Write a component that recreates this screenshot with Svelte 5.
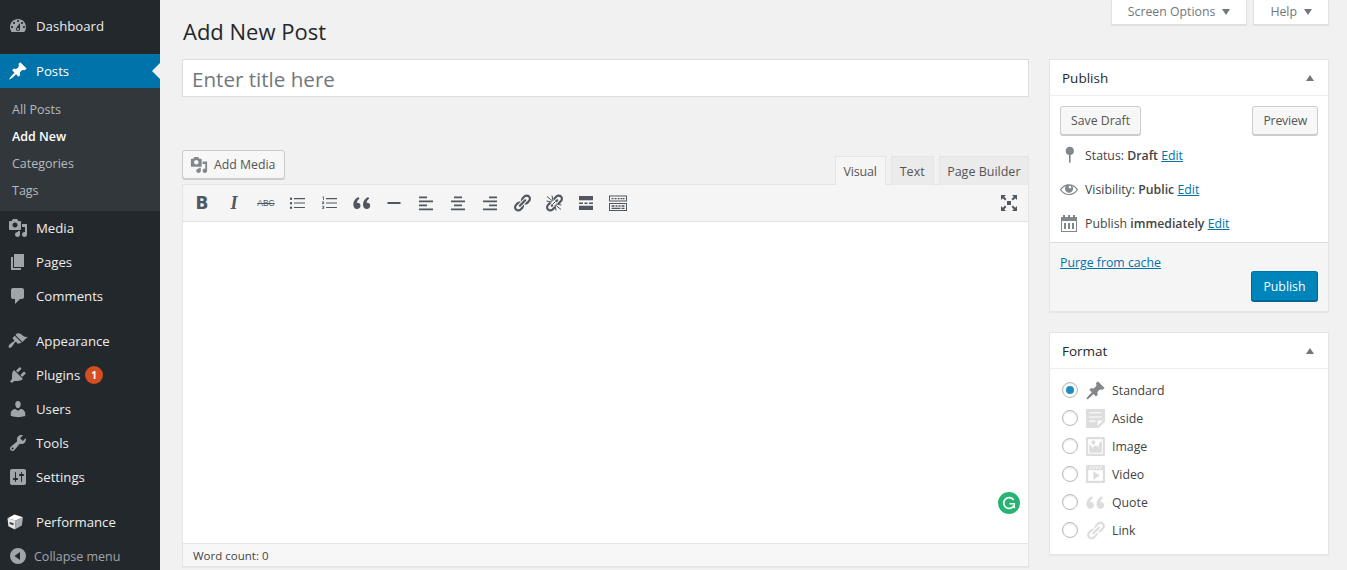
<script lang="ts">
  const ic = {
    dashboard: "M3.76 16h12.48c1.1-1.37 1.76-3.11 1.76-5 0-4.42-3.58-8-8-8s-8 3.58-8 8c0 1.89.66 3.63 1.76 5zM10 4c.55 0 1 .45 1 1s-.45 1-1 1-1-.45-1-1 .45-1 1-1zM6 6c.55 0 1 .45 1 1s-.45 1-1 1-1-.45-1-1 .45-1 1-1zm8 0c.55 0 1 .45 1 1s-.45 1-1 1-1-.45-1-1 .45-1 1-1zm-5.37 5.55L12 7v6c0 1.1-.9 2-2 2s-2-.9-2-2c0-.57.24-1.08.63-1.45zM4 10c.55 0 1 .45 1 1s-.45 1-1 1-1-.45-1-1 .45-1 1-1zm12 0c.55 0 1 .45 1 1s-.45 1-1 1-1-.45-1-1 .45-1 1-1zm-5 3c0-.55-.45-1-1-1s-1 .45-1 1 .45 1 1 1 1-.45 1-1z",
    pin: "M10.44 3.02l1.82-1.82 6.36 6.35-1.83 1.82c-1.05-.68-2.48-.57-3.41.36l-.75.75c-.92.93-1.04 2.35-.35 3.41l-1.83 1.82-2.41-2.41-2.8 2.79c-.42.42-3.38 2.71-3.8 2.29s1.86-3.39 2.28-3.81l2.79-2.79L4.1 9.36l1.83-1.82c1.05.69 2.48.57 3.4-.36l.75-.75c.93-.92 1.05-2.35.36-3.41z",
    media: "M13 11V4c0-.55-.45-1-1-1h-1.67L9 1H5L3.67 3H2c-.55 0-1 .45-1 1v7c0 .55.45 1 1 1h10c.55 0 1-.45 1-1zM7 4.5c1.38 0 2.5 1.12 2.5 2.5S8.38 9.5 7 9.5 4.5 8.38 4.5 7 5.62 4.5 7 4.5zM14 6h5v10.5c0 1.38-1.12 2.5-2.5 2.5S14 17.88 14 16.5s1.12-2.5 2.5-2.5c.17 0 .34.02.5.05V9h-3V6zm-4 8.05V13h2v3.5c0 1.38-1.12 2.5-2.5 2.5S7 17.88 7 16.5 8.12 14 9.5 14c.17 0 .34.02.5.05z",
    page: "M6 15V2h10v13H6zm-1 1h8v2H3V5h2v11z",
    comment: "M5 2h9c1.1 0 2 .9 2 2v7c0 1.1-.9 2-2 2h-2l-5 5v-5H5c-1.1 0-2-.9-2-2V4c0-1.1.9-2 2-2z",
    brush: "M14.48 11.06L7.41 3.99l1.5-1.5c.5-.56 2.3-.47 3.51.32 1.21.8 1.43 1.28 2.91 2.1 1.18.64 2.45 1.26 4.45.85zm-.71.71L6.7 4.7 4.93 6.47c-.39.39-.39 1.02 0 1.41l1.06 1.06c.39.39.39 1.03 0 1.42-.6.6-3.4 2.1-4.2 2.9-.9.9-1.7 2.6-1 3.3.7.7 2.4-.1 3.3-1 .8-.8 2.3-3.6 2.9-4.2.39-.39 1.02-.39 1.41 0l1.06 1.06c.39.39 1.02.39 1.41 0z",
    plug: "M13.11 4.36L9.87 7.6 8 5.73l3.24-3.24c.35-.34 1.05-.2 1.56.32.52.51.66 1.21.31 1.55zm-8 1.77l.91-1.12 9.01 9.01-1.19.84c-.71.71-2.63 1.16-3.82 1.16H6.14L4.9 17.26c-.59.59-1.54.59-2.12 0-.59-.58-.59-1.53 0-2.12l1.24-1.24v-3.88c0-1.13.4-3.19 1.09-3.89zm7.26 3.97l3.24-3.24c.34-.35 1.04-.21 1.55.31.52.51.66 1.21.31 1.55l-3.24 3.25z",
    users: "M10 9.25c-2.27 0-2.73-3.44-2.73-3.44C7 4.02 7.82 2 9.97 2c2.16 0 2.98 2.02 2.71 3.81 0 0-.41 3.44-2.68 3.44zm0 2.57L12.72 10c2.39 0 4.52 2.33 4.52 4.53v2.49s-3.65 1.13-7.24 1.13c-3.65 0-7.24-1.13-7.24-1.13v-2.49c0-2.25 1.94-4.48 4.47-4.48z",
    tools: "M16.68 9.77c-1.34 1.34-3.3 1.67-4.95.99l-5.41 6.52c-.99.99-2.59.99-3.58 0s-.99-2.59 0-3.57l6.52-5.42c-.68-1.65-.35-3.61.99-4.95 1.28-1.28 3.12-1.62 4.72-1.06l-2.89 2.89 2.82 2.82 2.86-2.87c.53 1.58.18 3.39-1.08 4.65zM3.81 16.21c.4.39 1.04.39 1.43 0 .4-.4.4-1.04 0-1.43-.39-.4-1.03-.4-1.43 0-.39.39-.39 1.03 0 1.43z",
    settings: "M18 16V4c0-1.1-.9-2-2-2H4c-1.1 0-2 .9-2 2v12c0 1.1.9 2 2 2h12c1.1 0 2-.9 2-2zM8 11h1c.55 0 1 .45 1 1s-.45 1-1 1H8v1.5c0 .28-.22.5-.5.5s-.5-.22-.5-.5V13H6c-.55 0-1-.45-1-1s.45-1 1-1h1V5.5c0-.28.22-.5.5-.5s.5.22.5.5V11zm5-2h-1c-.55 0-1-.45-1-1s.45-1 1-1h1V5.5c0-.28.22-.5.5-.5s.5.22.5.5V7h1c.55 0 1 .45 1 1s-.45 1-1 1h-1v5.5c0 .28-.22.5-.5.5s-.5-.22-.5-.5V9z",
    collapse: "M10 2a8 8 0 1 0 0 16 8 8 0 0 0 0-16zm2 4v8L6.5 10z",
    statusPin: "M10.8 1.8a4.2 4.2 0 0 1 .8 8.3V17l-.8 1.5L10 17v-6.9a4.2 4.2 0 0 1 .8-8.3z",
    eye: "M18.3 9.5C15 4.9 8.5 3.8 3.9 7.2c-1.2.9-2.2 2.1-3 3.4.2.4.5.8.8 1.2 3.3 4.6 9.6 5.6 14.2 2.4.9-.7 1.7-1.4 2.4-2.4.3-.4.5-.8.8-1.2-.3-.4-.5-.8-.8-1.1zm-8.2-2.3c.5-.5 1.3-.5 1.8 0s.5 1.3 0 1.8-1.3.5-1.8 0c-.5-.4-.5-1.3 0-1.8zm-.1 7.7c-3.1 0-6-1.6-7.7-4.2C3.5 9 5.1 7.8 7 7c-.7.8-1 1.7-1 2.7 0 2.2 1.7 4.1 4 4.1 2.2 0 4.1-1.7 4.1-4 0-1-.4-2-1.1-2.7 1.9.8 3.5 2 4.6 3.7-1.7 2.6-4.6 4.2-7.6 4.1z",
    calendar: "M2 4h2V2h2v2h3V2h2v2h3V2h2v2h2v15H2zm1 4v10h14V8zm2 2h2v6H5zm4 0h2v6H9zm4 0h2v6h-2z",
    aside: "M1 1h18v12l-6 6H1V1zm3 3v1h12V4H4zm0 4v1h12V8H4zm6 5v-1H4v1h6zm2 4l5-5h-5v5z",
    image: "M2.25 1h15.5c.69 0 1.25.56 1.25 1.25v15.5c0 .69-.56 1.25-1.25 1.25H2.25C1.56 19 1 18.44 1 17.75V2.25C1 1.56 1.56 1 2.25 1zM17 17V3H3v14h14zM10 6c0-1.1-.9-2-2-2s-2 .9-2 2 .9 2 2 2 2-.9 2-2zm3 5s0-6 3-6v10c0 .55-.45 1-1 1H5c-.55 0-1-.45-1-1V8c2 0 3 4 3 4s1-3 3-3 3 2 3 2z",
    video: "M2 1h16c.55 0 1 .45 1 1v16l-18-.02V2c0-.55.45-1 1-1zm4 1L4 5h1l2-3H6zm4 0H9L7 5h1zm3 0h-1l-2 3h1zm3 0h-1l-2 3h1zm1 14V6H3v10h14zM8 7l6 4-6 4V7z",
    quote: "M8.5 12.7c0-2.1-1.5-3.4-3.6-3 .1-1.5 1-3 2.6-3.9L6.4 4C3.4 5.3 1.3 8 1.3 11.5c0 2.7 1.4 4.5 3.7 4.5 2.1 0 3.5-1.4 3.5-3.3zm9.7 0c0-2.1-1.5-3.4-3.6-3 .1-1.5 1-3 2.6-3.9L16.1 4c-3 1.3-5.1 4-5.1 7.5 0 2.7 1.4 4.5 3.7 4.5 2.1 0 3.5-1.4 3.5-3.3z",
    link: "M17.74 2.76c1.68 1.69 1.68 4.41 0 6.1l-1.53 1.52c-1.12 1.12-2.7 1.47-4.14 1.09l2.62-2.61.76-.77.76-.76c.84-.84.84-2.2 0-3.04-.84-.85-2.2-.85-3.04 0l-.77.76-3.38 3.38c-.37-1.44-.02-3.02 1.1-4.14l1.52-1.53c1.69-1.68 4.42-1.68 6.1 0zM8.59 13.43l5.34-5.34c.42-.42.42-1.1 0-1.52-.44-.43-1.13-.39-1.53 0l-5.33 5.34c-.42.42-.42 1.1 0 1.52.44.43 1.13.39 1.52 0zm-.76 2.29l4.14-4.15c.38 1.44.03 3.02-1.09 4.14l-1.52 1.53c-1.69 1.68-4.41 1.68-6.1 0-1.68-1.68-1.68-4.42 0-6.1l1.53-1.52c1.12-1.12 2.7-1.47 4.14-1.1l-4.14 4.15c-.85.84-.85 2.2 0 3.05.84.84 2.2.84 3.04 0z",
    ul: "M3 4.5a1.2 1.2 0 1 1 0 2.4 1.2 1.2 0 0 1 0-2.4zM3 9a1.2 1.2 0 1 1 0 2.4A1.2 1.2 0 0 1 3 9zm0 4.5a1.2 1.2 0 1 1 0 2.4 1.2 1.2 0 0 1 0-2.4zM6 5h11v1.2H6zm0 4.4h11v1.2H6zm0 4.5h11v1.2H6z",
    ol: "M2.5 3.5h1.3v3.6h-.8V4.4h-.5zM2 8.4h2.2v.8l-1.2 1h1.2v.8H2v-.8l1.2-1H2zm0 4.3h2.2v3H2v-.7h1.4v-.5H2.5v-.6h.9v-.5H2zM6 5h11v1.2H6zm0 4.4h11v1.2H6zm0 4.5h11v1.2H6z",
    hr: "M3.5 9h13v2h-13z",
    left: "M3 3.5h8v1.7H3zm0 4h14v1.7H3zm0 4h8v1.7H3zm0 4h14v1.7H3z",
    center: "M6 3.5h8v1.7H6zm-3 4h14v1.7H3zm3 4h8v1.7H6zm-3 4h14v1.7H3z",
    right: "M9 3.5h8v1.7H9zm-6 4h14v1.7H3zm6 4h8v1.7H9zm-6 4h14v1.7H3z",
    more: "M3 3h14v4.3H3zm0 9.7h14V17H3zM3 9.4h4V11H3zm5.5 0h3V11h-3zm4.5 0h4V11h-4z",
    toggle: "M1 2.5h18v6H1zm1 1v4h16v-4zM3.5 5h2v1.3h-2zm3 0h2v1.3h-2zm3 0h2v1.3h-2zm3 0h2v1.3h-2zm2.5 0h1.5v1.3H15zM1 10h18v8H1zm1 1v6h16v-6zm1.5 1.2h3v1.5h-3zm4 0h2v1.5h-2zm3 0h2v1.5h-2zm3 0h3v1.5h-3zm-10 2.5h9v1.2h-9zm10 0h3v1.2h-3z",
    full: "M8 8h4v4H8zM2 2h5L5.2 3.8 7.5 6 6 7.5 3.8 5.2 2 7zm16 0v5l-1.8-1.8L14 7.5 12.5 6l2.3-2.2L13 2zM2 18v-5l1.8 1.8L6 12.5 7.5 14l-2.3 2.2L7 18zm16 0h-5l1.8-1.8L12.5 14l1.5-1.5 2.2 2.3L18 13z"
  };

  const menuContent = [
    { label: "Media", icon: ic.media },
    { label: "Pages", icon: ic.page },
    { label: "Comments", icon: ic.comment }
  ];
  const menuAdmin = [
    { label: "Appearance", icon: ic.brush },
    { label: "Plugins", icon: ic.plug, badge: 1 },
    { label: "Users", icon: ic.users },
    { label: "Tools", icon: ic.tools },
    { label: "Settings", icon: ic.settings }
  ];
  const subItems = [
    { label: "All Posts" },
    { label: "Add New", active: true },
    { label: "Categories" },
    { label: "Tags" }
  ];

  const toolbar = [
    { text: "B", cls: "t-bold" },
    { text: "I", cls: "t-ital" },
    { text: "ABC", cls: "t-strike" },
    { d: ic.ul },
    { d: ic.ol },
    { d: ic.quote },
    { d: ic.hr },
    { d: ic.left },
    { d: ic.center },
    { d: ic.right },
    { d: ic.link },
    { unlink: true },
    { d: ic.more },
    { d: ic.toggle }
  ];

  const formats = [
    { label: "Standard", icon: ic.pin, checked: true, dark: true },
    { label: "Aside", icon: ic.aside },
    { label: "Image", icon: ic.image },
    { label: "Video", icon: ic.video },
    { label: "Quote", icon: ic.quote },
    { label: "Link", icon: ic.link }
  ];
</script>

{#snippet svg(d, cls = "")}
  <svg class={cls} viewBox="0 0 20 20" aria-hidden="true"><path d={d} fill-rule="evenodd" /></svg>
{/snippet}

{#snippet menuItem(item)}
  <a class="menu-item" href="#top">
    {@render svg(item.icon, "menu-icon")}
    <span>{item.label}</span>
    {#if item.badge}<span class="badge">{item.badge}</span>{/if}
  </a>
{/snippet}

<div class="layout">
  <nav class="sidebar">
    {@render menuItem({ label: "Dashboard", icon: ic.dashboard })}
    <div class="sep"></div>
    <a class="menu-item current" href="#top">
      {@render svg(ic.pin, "menu-icon")}
      <span>Posts</span>
    </a>
    <ul class="submenu">
      {#each subItems as s}
        <li class:active={s.active}>{s.label}</li>
      {/each}
    </ul>
    {#each menuContent as item}{@render menuItem(item)}{/each}
    <div class="sep"></div>
    {#each menuAdmin as item}{@render menuItem(item)}{/each}
    <div class="sep"></div>
    <a class="menu-item" href="#top">
      <svg class="cube" viewBox="0 0 20 20" aria-hidden="true">
        <path d="M9.5 2.5 18 5.2 10.8 8.6 2.5 6.2z" fill="#fff" />
        <path d="M2.5 6.2 10.8 8.6 9.8 17.5 3.4 14.2z" fill="#e6e6e6" />
        <path d="M10.8 8.6 18 5.2 16.8 13.4 9.8 17.5z" fill="#a9adb1" />
        <path d="M4.6 10 8.6 11.2 8.4 13.3 4.7 12z" fill="#3a3f44" />
      </svg>
      <span>Performance</span>
    </a>
    <div class="collapse">
      {@render svg(ic.collapse, "menu-icon")}
      <span>Collapse menu</span>
    </div>
  </nav>

  <main class="main">
    <header class="top">
      <h1>Add New Post</h1>
      <div class="meta-links">
        <button class="meta-tab">Screen Options<i class="down"></i></button>
        <button class="meta-tab">Help<i class="down"></i></button>
      </div>
    </header>

    <div class="columns">
      <section class="body">
        <div class="title">Enter title here</div>

        <div class="editor-tools">
          <button class="btn media-btn">{@render svg(ic.media, "btn-icon")}Add Media</button>
          <div class="tabs">
            <span class="tab on">Visual</span>
            <span class="tab">Text</span>
            <span class="tab">Page Builder</span>
          </div>
        </div>

        <div class="editor">
          <div class="toolbar">
            {#each toolbar as t}
              <span class="tool">
                {#if t.text}
                  <span class={t.cls}>{t.text}</span>
                {:else if t.unlink}
                  <svg viewBox="0 0 20 20" aria-hidden="true">
                    <path d={ic.link} fill-rule="evenodd" />
                    <path d="M2 2 18 18" stroke="#f5f5f5" stroke-width="4.5" />
                    <path d="M3 3.5 8.5 8M8 2.5 9 8M2.5 8 8 9M17 16.5 11.5 12M12 17.5 11 12M17.5 12 12 11M8.5 11.5 11.5 8.5" stroke="#50575e" stroke-width="1" />
                  </svg>
                {:else}
                  {@render svg(t.d)}
                {/if}
              </span>
            {/each}
            <span class="tool fullscreen">{@render svg(ic.full)}</span>
          </div>
          <div class="canvas">
            <svg class="grammarly" viewBox="0 0 22 22" aria-hidden="true">
              <circle cx="11" cy="11" r="11" fill="#25b472" />
              <path d="M15.6 8a5.4 5.4 0 1 0 .3 5.6" fill="none" stroke="#fff" stroke-width="1.7" />
              <path d="M11.5 11.7h4.8v4.6" fill="none" stroke="#fff" stroke-width="1.5" />
            </svg>
          </div>
          <div class="status">Word count: 0</div>
        </div>
      </section>

      <aside class="side">
        <div class="box">
          <div class="box-head"><h2>Publish</h2><i class="up"></i></div>
          <div class="actions">
            <button class="btn">Save Draft</button>
            <button class="btn">Preview</button>
          </div>
          <div class="misc">
            <div class="misc-row">
              {@render svg(ic.statusPin, "misc-icon")}
              <span>Status: <b>Draft</b> <a href="#top">Edit</a></span>
            </div>
            <div class="misc-row">
              {@render svg(ic.eye, "misc-icon")}
              <span>Visibility: <b>Public</b> <a href="#top">Edit</a></span>
            </div>
            <div class="misc-row">
              {@render svg(ic.calendar, "misc-icon")}
              <span>Publish <b>immediately</b> <a href="#top">Edit</a></span>
            </div>
          </div>
          <div class="major">
            <a href="#top">Purge from cache</a>
            <div class="major-btn"><button class="btn primary">Publish</button></div>
          </div>
        </div>

        <div class="box">
          <div class="box-head"><h2>Format</h2><i class="up"></i></div>
          <div class="formats">
            {#each formats as f}
              <div class="format">
                <span class="radio" class:checked={f.checked}></span>
                {@render svg(f.icon, f.dark ? "fmt-icon dark" : "fmt-icon")}
                <span>{f.label}</span>
              </div>
            {/each}
          </div>
        </div>
      </aside>
    </div>
  </main>
</div>

<style>
  :global(body) {
    margin: 0;
    background: #f1f1f1;
    overflow: hidden;
  }
  :global(*) {
    box-sizing: border-box;
  }
  .layout {
    display: flex;
    height: 570px;
    overflow: hidden;
    font-family: "Open Sans", "Noto Sans", sans-serif;
    font-size: 12.3px;
    color: #444;
    background: #f1f1f1;
  }
  a {
    color: #0073aa;
  }

  /* admin menu */
  .sidebar {
    width: 160px;
    flex: none;
    padding-top: 9px;
    background: #23282d;
    font-size: 13.2px;
  }
  .sep {
    height: 11px;
  }
  .menu-item {
    position: relative;
    display: flex;
    align-items: center;
    height: 34px;
    padding-left: 8px;
    color: #eee;
    text-decoration: none;
  }
  .menu-item.current {
    background: #0073aa;
    color: #fff;
  }
  .menu-item.current::after {
    content: "";
    position: absolute;
    right: 0;
    top: 9px;
    border: 8px solid transparent;
    border-right-color: #f1f1f1;
    border-left-width: 0;
  }
  :global(.menu-icon) {
    width: 20px;
    height: 20px;
    flex: none;
    margin-right: 8px;
    fill: #a0a5aa;
  }
  .current :global(.menu-icon) {
    fill: #fff;
  }
  .cube {
    width: 20px;
    height: 20px;
    flex: none;
    margin-left: -3px;
    margin-right: 11px;
  }
  .badge {
    width: 18px;
    height: 18px;
    margin-left: 5px;
    border-radius: 50%;
    background: #d54e21;
    color: #fff;
    font-size: 10px;
    font-weight: 700;
    line-height: 18px;
    text-align: center;
  }
  .submenu {
    margin: 0;
    padding: 8px 0 7px 12px;
    list-style: none;
    background: #32373c;
    color: rgba(240, 245, 250, 0.7);
    font-size: 12.5px;
  }
  .submenu li {
    height: 27px;
    line-height: 27px;
  }
  .submenu li.active {
    color: #fff;
    font-weight: 600;
  }
  .collapse {
    display: flex;
    align-items: center;
    height: 34px;
    padding-left: 8px;
    color: #a0a5aa;
    font-size: 12.5px;
  }
  .collapse :global(.menu-icon) {
    margin-right: 6px;
  }

  /* main area */
  .main {
    flex: 1;
    min-width: 0;
    padding: 0 18px 0 22px;
  }
  .top {
    display: flex;
    justify-content: space-between;
    height: 59px;
  }
  h1 {
    margin: 0 0 0 1px;
    padding-top: 15px;
    font-size: 22px;
    font-weight: 400;
    line-height: 32px;
    color: #23282d;
  }
  .meta-links {
    display: flex;
    gap: 6px;
    align-items: flex-start;
  }
  .meta-tab {
    height: 25px;
    padding: 0 16px 1px;
    border: 1px solid #e1e1e1;
    border-top: 0;
    background: #fff;
    box-shadow: 0 1px 1px rgba(0, 0, 0, 0.06);
    color: #72777c;
    font: inherit;
  }
  .down,
  .up {
    display: inline-block;
    width: 0;
    height: 0;
    border-left: 4.5px solid transparent;
    border-right: 4.5px solid transparent;
  }
  .down {
    margin-left: 7px;
    border-top: 6px solid #72777c;
    vertical-align: 1px;
  }
  .up {
    border-bottom: 6px solid #72777c;
  }
  .columns {
    display: grid;
    grid-template-columns: 847px 280px;
    gap: 20px;
  }

  .title {
    height: 38px;
    padding-left: 9px;
    border: 1px solid #ddd;
    background: #fff;
    color: #72777c;
    font-size: 20.6px;
    line-height: 38px;
  }
  .editor-tools {
    display: flex;
    justify-content: space-between;
    align-items: flex-end;
    height: 35px;
    margin-top: 53px;
  }
  .btn {
    height: 29px;
    padding: 0 10px;
    border: 1px solid #ccc;
    border-radius: 3px;
    background: #f7f7f7;
    box-shadow: 0 1px 0 #ccc;
    color: #555;
    font: inherit;
    white-space: nowrap;
  }
  .media-btn {
    display: flex;
    align-items: center;
    align-self: flex-start;
    width: 103px;
    padding: 0 7px;
  }
  :global(.btn-icon) {
    width: 18px;
    height: 18px;
    margin-right: 6px;
    fill: #82878c;
  }
  .tabs {
    display: flex;
    gap: 5px;
  }
  .tab {
    height: 29px;
    padding: 0 8px;
    border: 1px solid #e5e5e5;
    border-bottom: 0;
    background: #ebebeb;
    color: #555;
    font-size: 12.5px;
    line-height: 29px;
  }
  .tab:last-child {
    padding: 0 7.5px;
  }
  .tab.on {
    position: relative;
    background: #f5f5f5;
    letter-spacing: -0.2px;
  }
  .editor {
    margin-top: -1px;
    border: 1px solid #e5e5e5;
    box-shadow: 0 1px 1px rgba(0, 0, 0, 0.04);
  }
  .toolbar {
    display: flex;
    align-items: center;
    height: 37px;
    padding: 0 3px;
    background: #f5f5f5;
    border-bottom: 1px solid #e0e0e0;
  }
  .tool {
    display: flex;
    width: 32px;
    height: 30px;
    align-items: center;
    justify-content: center;
    color: #50575e;
  }
  .tool svg,
  .tool :global(svg) {
    width: 20px;
    height: 20px;
    fill: #50575e;
  }
  .fullscreen {
    margin-left: auto;
  }
  .t-bold {
    font: 700 17px "DejaVu Sans", sans-serif;
  }
  .t-ital {
    font: italic 700 18px "Liberation Serif", serif;
  }
  .t-strike {
    font: 400 8.5px "Liberation Sans", sans-serif;
    text-decoration: line-through;
  }
  .canvas {
    position: relative;
    height: 321px;
    background: #fff;
  }
  .grammarly {
    position: absolute;
    right: 8px;
    bottom: 29px;
    width: 22px;
    height: 22px;
  }
  .status {
    height: 23px;
    padding-left: 10px;
    border-top: 1px solid #e5e5e5;
    background: #f7f7f7;
    color: #444;
    font-size: 11.5px;
    line-height: 23px;
  }

  /* right column */
  .side {
    display: flex;
    flex-direction: column;
    gap: 20px;
  }
  .box {
    border: 1px solid #e5e5e5;
    background: #fff;
    box-shadow: 0 1px 1px rgba(0, 0, 0, 0.04);
  }
  .box-head {
    display: flex;
    justify-content: space-between;
    align-items: center;
    height: 36px;
    padding: 0 14px 0 12px;
    border-bottom: 1px solid #eee;
  }
  h2 {
    margin: 0;
    font-size: 13.5px;
    font-weight: 500;
    color: #23282d;
  }
  .actions {
    display: flex;
    justify-content: space-between;
    padding: 10px 10px 0;
  }
  .actions .btn:last-child {
    letter-spacing: -0.2px;
  }
  .misc {
    padding: 3px 10px 2px;
  }
  .misc-row {
    display: flex;
    align-items: center;
    height: 34px;
    gap: 6px;
  }
  :global(.misc-icon) {
    width: 20px;
    height: 20px;
    flex: none;
    margin-left: -1px;
    fill: #82878c;
  }
  .misc b {
    font-weight: 600;
  }
  .major {
    height: 69px;
    padding: 11px 10px 0;
    border-top: 1px solid #ddd;
    background: #f5f5f5;
  }
  .major-btn {
    display: flex;
    justify-content: flex-end;
  }
  .primary {
    height: 30px;
    padding: 0 11.5px;
    border-color: #0073aa #006799 #006799;
    background: #0085ba;
    box-shadow: 0 1px 0 #006799;
    color: #fff;
  }
  .formats {
    padding: 7px 12px 10px;
  }
  .format {
    display: flex;
    align-items: center;
    height: 28px;
  }
  .radio {
    position: relative;
    width: 16px;
    height: 16px;
    margin-right: 8px;
    border: 1px solid #b4b9be;
    border-radius: 50%;
    background: #fff;
    box-shadow: inset 0 1px 2px rgba(0, 0, 0, 0.1);
  }
  .radio.checked::after {
    content: "";
    position: absolute;
    inset: 3px;
    border-radius: 50%;
    background: #1e8cbe;
  }
  :global(.fmt-icon) {
    width: 21px;
    height: 21px;
    margin-left: -1px;
    margin-right: 6px;
    fill: #ddd;
  }
  :global(.fmt-icon.dark) {
    fill: #82878c;
  }
</style>
